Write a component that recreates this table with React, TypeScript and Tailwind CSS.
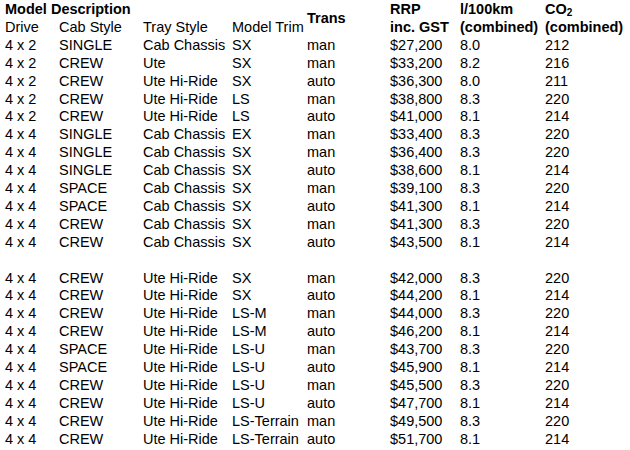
import React from "react";

const g1: string[][] = [
  ["4 x 2", "SINGLE", "Cab Chassis", "SX", "man", "$27,200", "8.0", "212"],
  ["4 x 2", "CREW", "Ute", "SX", "man", "$33,200", "8.2", "216"],
  ["4 x 2", "CREW", "Ute Hi-Ride", "SX", "auto", "$36,300", "8.0", "211"],
  ["4 x 2", "CREW", "Ute Hi-Ride", "LS", "man", "$38,800", "8.3", "220"],
  ["4 x 2", "CREW", "Ute Hi-Ride", "LS", "auto", "$41,000", "8.1", "214"],
  ["4 x 4", "SINGLE", "Cab Chassis", "EX", "man", "$33,400", "8.3", "220"],
  ["4 x 4", "SINGLE", "Cab Chassis", "SX", "man", "$36,400", "8.3", "220"],
  ["4 x 4", "SINGLE", "Cab Chassis", "SX", "auto", "$38,600", "8.1", "214"],
  ["4 x 4", "SPACE", "Cab Chassis", "SX", "man", "$39,100", "8.3", "220"],
  ["4 x 4", "SPACE", "Cab Chassis", "SX", "auto", "$41,300", "8.1", "214"],
  ["4 x 4", "CREW", "Cab Chassis", "SX", "man", "$41,300", "8.3", "220"],
  ["4 x 4", "CREW", "Cab Chassis", "SX", "auto", "$43,500", "8.1", "214"],
];

const g2: string[][] = [
  ["4 x 4", "CREW", "Ute Hi-Ride", "SX", "man", "$42,000", "8.3", "220"],
  ["4 x 4", "CREW", "Ute Hi-Ride", "SX", "auto", "$44,200", "8.1", "214"],
  ["4 x 4", "CREW", "Ute Hi-Ride", "LS-M", "man", "$44,000", "8.3", "220"],
  ["4 x 4", "CREW", "Ute Hi-Ride", "LS-M", "auto", "$46,200", "8.1", "214"],
  ["4 x 4", "SPACE", "Ute Hi-Ride", "LS-U", "man", "$43,700", "8.3", "220"],
  ["4 x 4", "SPACE", "Ute Hi-Ride", "LS-U", "auto", "$45,900", "8.1", "214"],
  ["4 x 4", "CREW", "Ute Hi-Ride", "LS-U", "man", "$45,500", "8.3", "220"],
  ["4 x 4", "CREW", "Ute Hi-Ride", "LS-U", "auto", "$47,700", "8.1", "214"],
  ["4 x 4", "CREW", "Ute Hi-Ride", "LS-Terrain", "man", "$49,500", "8.3", "220"],
  ["4 x 4", "CREW", "Ute Hi-Ride", "LS-Terrain", "auto", "$51,700", "8.1", "214"],
];

function Row({ r }: { r: string[] }) {
  return (
    <>
      {r.map((c, i) => (
        <div key={i} className="whitespace-nowrap">
          {c}
        </div>
      ))}
    </>
  );
}

export default function App() {
  return (
    <div
      className="w-[630px] h-[450px] bg-white text-black overflow-hidden pl-[5px] pt-[1px] text-[14.5px] leading-[17.9px]"
      style={{ fontFamily: '"Liberation Sans", Arial, Helvetica, sans-serif' }}
    >
      <div className="grid grid-cols-[54px_84px_89px_75px_83px_70px_85px_1fr]">
        <div className="col-span-4 font-bold">Model Description</div>
        <div className="row-span-2 self-center font-bold">Trans</div>
        <div className="font-bold">RRP</div>
        <div className="font-bold">l/100km</div>
        <div className="font-bold">
          CO<sub className="text-[10px] relative top-[2px] align-baseline">2</sub>
        </div>
        <div>Drive</div>
        <div>Cab Style</div>
        <div>Tray Style</div>
        <div className="whitespace-nowrap">Model Trim</div>
        <div className="font-bold whitespace-nowrap">inc. GST</div>
        <div className="font-bold whitespace-nowrap">(combined)</div>
        <div className="font-bold whitespace-nowrap">(combined)</div>
        {g1.map((r, i) => (
          <Row key={"a" + i} r={r} />
        ))}
        <div className="col-span-8 h-[17.9px]" />
        {g2.map((r, i) => (
          <Row key={"b" + i} r={r} />
        ))}
      </div>
    </div>
  );
}
